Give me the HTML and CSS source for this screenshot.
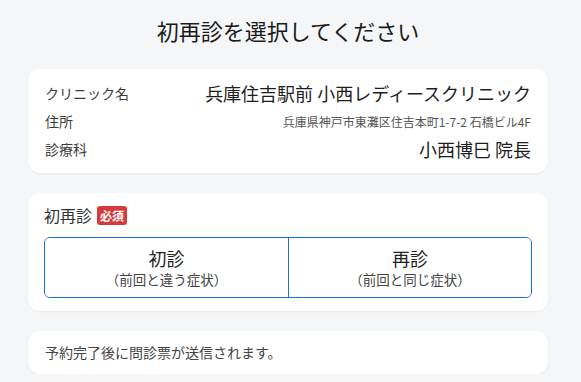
FILE: index.html
```html
<!DOCTYPE html>
<html lang="ja">
<head>
<meta charset="utf-8">
<title>初再診を選択してください</title>
<link rel="stylesheet" href="styles.css">
</head>
<body>
<main class="page">
  <h1 class="title">初再診を選択してください</h1>

  <section class="card info">
    <div class="row">
      <span class="label">クリニック名</span>
      <span class="value">兵庫住吉駅前 小西レディースクリニック</span>
    </div>
    <div class="row">
      <span class="label">住所</span>
      <span class="value small">兵庫県神戸市東灘区住吉本町1-7-2 石橋ビル4F</span>
    </div>
    <div class="row">
      <span class="label">診療科</span>
      <span class="value">小西博巳 院長</span>
    </div>
  </section>

  <section class="card choose">
    <div class="field-head">
      <span class="field-label">初再診</span>
      <span class="badge">必須</span>
    </div>
    <div class="options">
      <button class="option" type="button">
        <span class="opt-main">初診</span>
        <span class="opt-sub">（前回と違う症状）</span>
      </button>
      <button class="option" type="button">
        <span class="opt-main">再診</span>
        <span class="opt-sub">（前回と同じ症状）</span>
      </button>
    </div>
  </section>

  <section class="card note">
    <p class="note-text">予約完了後に問診票が送信されます。</p>
  </section>
</main>
</body>
</html>
```

FILE: styles.css
```css
* {
  box-sizing: border-box;
}

html, body {
  margin: 0;
  padding: 0;
  background: #f5f6f8;
}

body {
  font-family: "Noto Sans CJK JP", "Noto Sans", sans-serif;
  color: #222;
}

.page {
  padding: 14px 33px 0 28px;
  display: flex;
  flex-direction: column;
  gap: 20px;
}

.title {
  margin: 0 0 2px;
  font-size: 22px;
  line-height: 33px;
  font-weight: 400;
  text-align: center;
  color: #1a1a1a;
}

.card {
  background: #fff;
  border-radius: 12px;
  box-shadow: 0 1px 2px rgba(0, 0, 0, 0.05);
  width: 520px;
}

.info {
  padding: 10px 17px 10px 17px;
}

.row {
  display: flex;
  justify-content: space-between;
  align-items: center;
  height: 28px;
}

.label {
  font-size: 14px;
  color: #3c3c3c;
}

.value {
  font-size: 18px;
  color: #1e1e1e;
}

.value.small {
  font-size: 12px;
  color: #555;
}

.choose {
  padding: 11px 16px 13px;
}

.field-head {
  display: flex;
  align-items: center;
  gap: 5px;
  height: 22px;
  margin-bottom: 11px;
}

.field-label {
  font-size: 16px;
  color: #333;
}

.badge {
  background: #d83a3a;
  color: #fff;
  font-size: 12px;
  font-weight: 700;
  line-height: 19px;
  padding: 0 3px;
  border-radius: 3px;
}

.options {
  display: grid;
  grid-template-columns: 1fr 1fr;
  border: 1px solid #1a73cf;
  border-radius: 6px;
  overflow: hidden;
}

.option {
  display: flex;
  flex-direction: column;
  align-items: center;
  padding: 8px 0 9px;
  background: #fff;
  border: 0;
  margin: 0;
  font-family: inherit;
  cursor: pointer;
}

.option + .option {
  border-left: 1px solid #1a73cf;
}

.opt-main {
  font-size: 18px;
  line-height: 24px;
  color: #222;
}

.opt-sub {
  font-size: 13.5px;
  line-height: 18px;
  color: #444;
}

.note {
  padding: 11px 17px;
}

.note-text {
  margin: 0;
  font-size: 14px;
  line-height: 21px;
  color: #444;
}
```
